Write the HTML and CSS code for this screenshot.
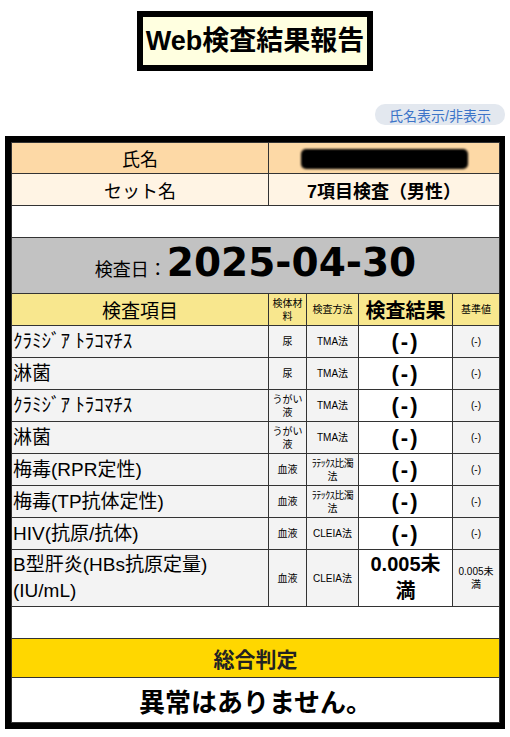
FILE: index.html
```html
<!DOCTYPE html>
<html lang="ja">
<head>
    <meta charset="UTF-8">
    <meta name="viewport" content="width=device-width, initial-scale=1.0">
    <title>Web検査結果報告</title>
    <link rel="stylesheet" href="styles.css">
</head>
<body>
    <div class="page">
        <h1 class="title">Web検査結果報告</h1>

        <div class="toolbar">
            <button class="toggle-name" type="button">氏名表示/非表示</button>
        </div>

        <div class="report">
            <table class="result-table">
                <colgroup>
                    <col class="col-item">
                    <col class="col-sample">
                    <col class="col-method">
                    <col class="col-result">
                    <col class="col-ref">
                </colgroup>
                <tr class="row-name">
                    <td>氏名</td>
                    <td colspan="4"><span class="name-mask"></span></td>
                </tr>
                <tr class="row-set">
                    <td>セット名</td>
                    <td colspan="4" class="set-name">7項目検査（男性）</td>
                </tr>
                <tr class="row-blank">
                    <td colspan="5"></td>
                </tr>
                <tr class="row-date">
                    <td colspan="5">検査日：<span class="date">2025-04-30</span></td>
                </tr>
                <tr class="row-head">
                    <th class="head-item">検査項目</th>
                    <th class="head-small">検体材<br>料</th>
                    <th class="head-small">検査方法</th>
                    <th class="head-result">検査結果</th>
                    <th class="head-small">基準値</th>
                </tr>
                <tr class="row-data">
                    <td class="item">ｸﾗﾐｼﾞｱ ﾄﾗｺﾏﾁｽ</td>
                    <td class="small">尿</td>
                    <td class="small">TMA法</td>
                    <td class="result">(-)</td>
                    <td class="small">(-)</td>
                </tr>
                <tr class="row-data">
                    <td class="item">淋菌</td>
                    <td class="small">尿</td>
                    <td class="small">TMA法</td>
                    <td class="result">(-)</td>
                    <td class="small">(-)</td>
                </tr>
                <tr class="row-data">
                    <td class="item">ｸﾗﾐｼﾞｱ ﾄﾗｺﾏﾁｽ</td>
                    <td class="small">うがい<br>液</td>
                    <td class="small">TMA法</td>
                    <td class="result">(-)</td>
                    <td class="small">(-)</td>
                </tr>
                <tr class="row-data">
                    <td class="item">淋菌</td>
                    <td class="small">うがい<br>液</td>
                    <td class="small">TMA法</td>
                    <td class="result">(-)</td>
                    <td class="small">(-)</td>
                </tr>
                <tr class="row-data">
                    <td class="item">梅毒(RPR定性)</td>
                    <td class="small">血液</td>
                    <td class="small"><span class="narrow">ﾗﾃｯｸｽ比濁</span><br>法</td>
                    <td class="result">(-)</td>
                    <td class="small">(-)</td>
                </tr>
                <tr class="row-data">
                    <td class="item">梅毒(TP抗体定性)</td>
                    <td class="small">血液</td>
                    <td class="small"><span class="narrow">ﾗﾃｯｸｽ比濁</span><br>法</td>
                    <td class="result">(-)</td>
                    <td class="small">(-)</td>
                </tr>
                <tr class="row-data">
                    <td class="item">HIV(抗原/抗体)</td>
                    <td class="small">血液</td>
                    <td class="small">CLEIA法</td>
                    <td class="result">(-)</td>
                    <td class="small">(-)</td>
                </tr>
                <tr class="row-data row-tall">
                    <td class="item">B型肝炎(HBs抗原定量)<br>(IU/mL)</td>
                    <td class="small">血液</td>
                    <td class="small">CLEIA法</td>
                    <td class="result result-num">0.005未<br>満</td>
                    <td class="small">0.005未<br>満</td>
                </tr>
                <tr class="row-blank">
                    <td colspan="5"></td>
                </tr>
                <tr class="row-verdict-head">
                    <td colspan="5">総合判定</td>
                </tr>
                <tr class="row-verdict">
                    <td colspan="5">異常はありません。</td>
                </tr>
            </table>
        </div>
    </div>
</body>
</html>
```

FILE: styles.css
```css
body {
    margin: 0;
    font-family: "Liberation Sans", "Noto Sans CJK JP", sans-serif;
    color: #000;
    background: #fff;
}

.page {
    width: 500px;
    margin: 0 auto;
    padding-top: 11px;
}

.title {
    width: fit-content;
    margin: 0 auto;
    padding: 0 3px;
    border: 6px solid #000;
    background: #ffffe0;
    font-size: 27px;
    line-height: 48px;
    font-weight: bold;
}

.toolbar {
    display: flex;
    justify-content: flex-end;
    margin: 33px 0 11px;
}

.toggle-name {
    height: 21px;
    padding: 0 14px;
    border: none;
    border-radius: 10px;
    background: #e3e8ef;
    color: #3c74c8;
    font-family: inherit;
    font-size: 14px;
}

.report {
    border: 6px solid #000;
}

.result-table {
    width: 100%;
    border-collapse: collapse;
    table-layout: fixed;
}

.col-item { width: 257px; }
.col-sample { width: 38px; }
.col-method { width: 52px; }
.col-result { width: 94px; }
.col-ref { width: 47px; }

.result-table td,
.result-table th {
    padding: 0;
    border: 1px solid #333;
    text-align: center;
    font-weight: normal;
}

.row-name td {
    height: 30px;
    background: #fdd9a6;
    font-size: 18px;
}

.name-mask {
    display: inline-block;
    width: 167px;
    height: 20px;
    vertical-align: middle;
    border-radius: 5px;
    background: #000;
    filter: blur(1px);
}

.row-set td {
    height: 31px;
    background: #fff4e4;
    font-size: 18px;
}

.row-set .set-name {
    font-weight: bold;
}

.row-blank td {
    height: 31px;
    background: #fff;
}

.row-date td {
    height: 55px;
    background: #c2c2c2;
    font-size: 18px;
    vertical-align: bottom;
    line-height: 46px;
}

.date {
    font-family: "DejaVu Sans", sans-serif;
    font-size: 39px;
    font-weight: bold;
}

.row-head th {
    height: 31px;
    background: #f8e78e;
}

.head-item {
    font-size: 19px;
}

.head-small {
    font-size: 10px;
    line-height: 13px;
}

.head-result {
    font-size: 20px;
    font-weight: bold !important;
}

.row-data td {
    height: 31px;
    background: #f3f3f3;
}

.row-tall td {
    height: 56px;
}

.item {
    text-align: left !important;
    padding-left: 1px !important;
    font-size: 19px;
    line-height: 26px;
}

.small {
    font-size: 10px;
    line-height: 13px;
}

.narrow {
    letter-spacing: -0.5px;
}

.row-data .result {
    background: #fff;
    font-size: 22px;
    font-weight: bold;
    letter-spacing: 2px;
    line-height: 27px;
}

.row-data .result-num {
    font-size: 20px;
    letter-spacing: 0;
}

.row-verdict-head td {
    height: 38px;
    background: #ffd700;
    font-size: 21px;
    font-weight: bold;
    color: #222;
}

.row-verdict td {
    height: 44px;
    background: #fff;
    font-size: 26px;
    font-weight: bold;
}
```
